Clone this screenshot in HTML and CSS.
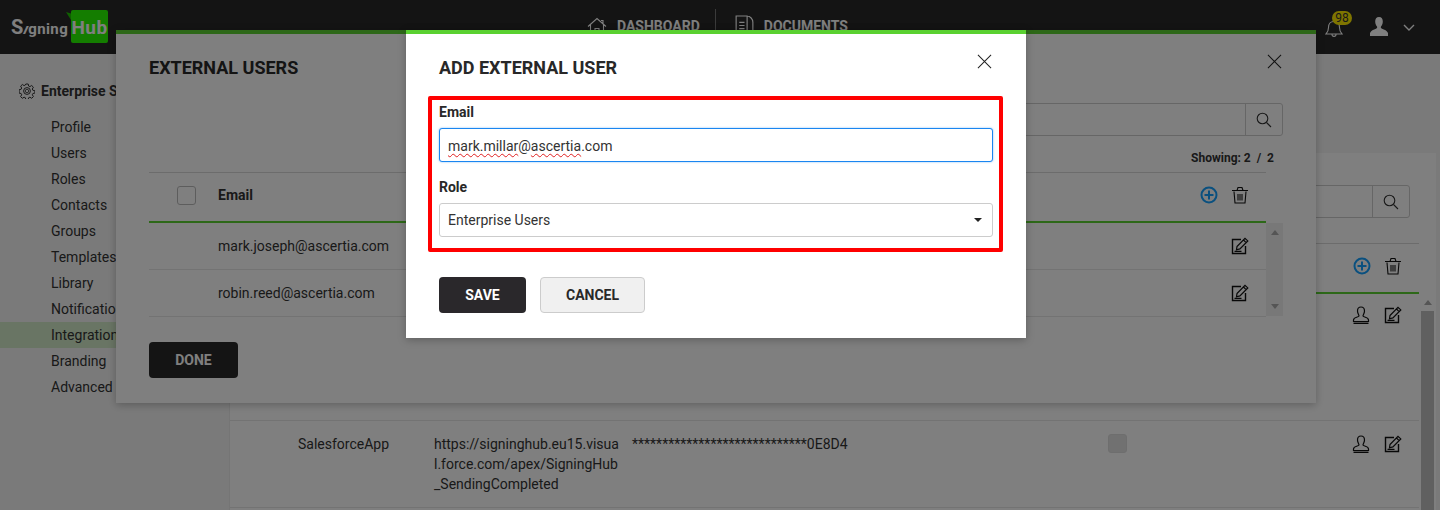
FILE: index.html
```html
<!DOCTYPE html>
<html lang="en">
<head>
<meta charset="utf-8">
<title>Add external user</title>
<link rel="stylesheet" href="styles.css">
</head>
<body>
<svg class="sprite" aria-hidden="true">
  <symbol id="i-edit" viewBox="0 0 18 18"><path d="M10 2.500H1.500v14h13V9" fill="none" stroke="currentColor" stroke-width="1.400"/><path d="M6 9.500 14 1.300l2.800 2.600-7.900 8-3.400.9zM12.500 3l2.600 2.600M3.500 14.300h7" fill="none" stroke="currentColor" stroke-width="1.200"/></symbol>
  <symbol id="i-stamp" viewBox="0 0 18 18"><path d="M9 1C6.500 1 5.500 2.800 5.500 5c0 2.500 1.500 3.500 1.500 5 0 1.200-5.500.8-5.500 4v1.500h15V14c0-3.200-5.500-2.800-5.500-4 0-1.500 1.500-2.500 1.500-5 0-2.200-1-4-3.500-4z" fill="none" stroke="currentColor" stroke-width="1.200"/><path d="M1.500 17.300h15" stroke="currentColor" stroke-width="1.400"/></symbol>
  <symbol id="i-plus" viewBox="0 0 18 18"><circle cx="9" cy="9" r="7.500" fill="none" stroke="currentColor" stroke-width="2"/><path d="M9 4.500v9M4.500 9h9" stroke="currentColor" stroke-width="2"/></symbol>
  <symbol id="i-trash" viewBox="0 0 18 18"><path d="M3 5.500 4 17h10l1-11.500M1 4.500h16M6 4.500 7 1.500h4l1 3M7 8v6.500M9 8v6.500M11 8v6.500" fill="none" stroke="currentColor" stroke-width="1.100"/></symbol>
  <symbol id="i-search" viewBox="0 0 16 16"><circle cx="6.500" cy="6.500" r="5.300" fill="none" stroke="currentColor" stroke-width="1.100"/><path d="m10.500 10.500 4.500 4.500" stroke="currentColor" stroke-width="1.100"/></symbol>
  <symbol id="i-close" viewBox="0 0 16 16"><path d="M1 1l14 14M15 1 1 15" stroke="currentColor" stroke-width="1.100"/></symbol>
</svg>

<div class="page">
  <header class="topbar">
    <div class="logo"><span class="logo-sign"><span class="logo-s">S</span><i class="logo-i">ı</i>gning</span><span class="logo-hub">Hub</span></div>
    <nav class="nav">
      <a class="nav-item">
        <svg class="nav-home" viewBox="0 0 20 18"><path d="M1 9.500 10 1.500l9 8M3.500 7.500V16.500h13V7.500M8 16.500V11.500h4v5M14 3.500h2v3" fill="none" stroke="currentColor" stroke-width="1.100"/></svg>
        DASHBOARD
      </a>
      <span class="nav-sep"></span>
      <a class="nav-item">
        <svg class="nav-doc" viewBox="0 0 18 22"><path d="M1 1h10.500v20H1zM11.500 1c3 0 5.500 3 5.500 6v14h-5.500M4 7h5M4 10h5M4 13h5M4 16h5" fill="none" stroke="currentColor" stroke-width="1.100"/></svg>
        DOCUMENTS
      </a>
    </nav>
    <div class="top-right">
      <div class="bell">
        <svg class="bell-icon" viewBox="0 0 18 18"><path d="M1 15h16c-2-2-2.500-3-2.500-6.500C14.500 5 12.500 2.500 9 2.500S3.500 5 3.500 8.500C3.500 12 3 13 1 15zM7 15.500c0 2.500 4 2.500 4 0" fill="none" stroke="currentColor" stroke-width="1.100"/></svg>
        <span class="badge">98</span>
      </div>
      <svg class="user" viewBox="0 0 18 20"><path d="M9 0c2.700 0 3.800 2 3.800 4.500 0 2.500-1 4-1.800 5-.5.900 0 1.800 1 2.300 2.500 1 5 1.700 6 4.200V19H0v-3c1-2.500 3.500-3.200 6-4.200 1-.5 1.500-1.400 1-2.300-.8-1-1.800-2.500-1.800-5C5.200 2 6.300 0 9 0z" fill="currentColor"/></svg>
      <svg class="chev" viewBox="0 0 12 8"><path d="m1 1 5 5 5-5" fill="none" stroke="currentColor" stroke-width="1.400"/></svg>
    </div>
  </header>

  <div class="body">
    <aside class="side">
      <div class="side-title">
        <svg class="gear" viewBox="0 0 16 16"><path d="M6.800 1h2.400l.4 2 1.300.6 1.800-1.100 1.700 1.700-1.100 1.800.6 1.300 2 .4v2.400l-2 .4-.6 1.300 1.100 1.800-1.700 1.700-1.800-1.100-1.300.6-.4 2H6.800l-.4-2-1.300-.6-1.800 1.100-1.700-1.700 1.100-1.800-.6-1.300-2-.4V6.700l2-.4.6-1.300-1.100-1.800 1.700-1.700 1.800 1.100 1.300-.6z" fill="none" stroke="currentColor" stroke-width="1"/><circle cx="8" cy="8" r="3.400" fill="none" stroke="currentColor" stroke-width="1"/><circle cx="8" cy="8" r="1.700" fill="none" stroke="currentColor" stroke-width=".8"/></svg>
        Enterprise Settings
      </div>
      <ul class="side-list">
        <li class="side-item">Profile</li>
        <li class="side-item">Users</li>
        <li class="side-item">Roles</li>
        <li class="side-item">Contacts</li>
        <li class="side-item">Groups</li>
        <li class="side-item">Templates</li>
        <li class="side-item">Library</li>
        <li class="side-item">Notifications</li>
        <li class="side-item is-active">Integrations</li>
        <li class="side-item">Branding</li>
        <li class="side-item">Advanced</li>
      </ul>
    </aside>

    <main class="main">
      <div class="panel">
        <section class="card">
          <div class="card-search">
            <div class="search"><span class="search-field"></span><span class="search-btn"><svg class="ic16"><use href="#i-search"/></svg></span></div>
          </div>
          <div class="card-head">
            <svg class="ic18 blue"><use href="#i-plus"/></svg>
            <svg class="ic18"><use href="#i-trash"/></svg>
          </div>
          <div class="card-row row-first">
            <span class="row-actions">
              <svg class="ic18"><use href="#i-stamp"/></svg>
              <svg class="ic18"><use href="#i-edit"/></svg>
            </span>
          </div>
          <div class="card-row row-sales">
            <span class="cell-name">SalesforceApp</span>
            <span class="cell-url">https://signinghub.eu15.visual.force.com/apex/SigningHub_SendingCompleted</span>
            <span class="cell-key">*****************************0E8D4</span>
            <span class="cell-check"><span class="check-off"></span></span>
            <span class="row-actions">
              <svg class="ic18"><use href="#i-stamp"/></svg>
              <svg class="ic18"><use href="#i-edit"/></svg>
            </span>
          </div>
        </section>
        <div class="page-scroll">
          <span class="arrow-up"></span>
          <span class="page-thumb"></span>
        </div>
      </div>
    </main>
  </div>

  <section class="modal modal-users">
    <h2 class="modal-title">EXTERNAL USERS</h2>
    <svg class="close"><use href="#i-close"/></svg>
    <div class="users-search">
      <div class="search search-wide"><span class="search-field"></span><span class="search-btn"><svg class="ic16"><use href="#i-search"/></svg></span></div>
    </div>
    <div class="showing">Showing: 2 &nbsp;/&nbsp; 2</div>
    <div class="users-head">
      <span class="check"></span>
      <span class="head-email">Email</span>
      <span class="head-actions">
        <svg class="ic18 blue"><use href="#i-plus"/></svg>
        <svg class="ic18"><use href="#i-trash"/></svg>
      </span>
    </div>
    <div class="users-body">
      <div class="users-rows">
        <div class="user-row"><span>mark.joseph@ascertia.com</span><svg class="ic18"><use href="#i-edit"/></svg></div>
        <div class="user-row"><span>robin.reed@ascertia.com</span><svg class="ic18"><use href="#i-edit"/></svg></div>
      </div>
      <div class="users-scroll"><span class="arrow-up"></span><span class="arrow-down"></span></div>
    </div>
    <button class="btn btn-done">DONE</button>
  </section>

  <div class="dim"></div>

  <section class="modal modal-add">
    <h2 class="modal-title">ADD EXTERNAL USER</h2>
    <svg class="close"><use href="#i-close"/></svg>
    <div class="highlight">
      <div class="field-label">Email</div>
      <div class="field field-focus"><span class="typo">mark.millar</span>@<span class="typo">ascertia</span>.com</div>
      <div class="field-label label-role">Role</div>
      <div class="field field-select">Enterprise Users<span class="caret"></span></div>
    </div>
    <div class="actions">
      <button class="btn btn-save">SAVE</button>
      <button class="btn btn-cancel">CANCEL</button>
    </div>
  </section>
</div>
</body>
</html>
```
FILE: styles.css
```css
* { box-sizing: border-box; }
html, body { margin: 0; height: 510px; overflow: hidden; }
body { font-family: Roboto, "Liberation Sans", sans-serif; font-size: 14px; color: #333; background: #f5f5f5; }
.sprite { width: 0; height: 0; position: absolute; }
.page { position: relative; width: 1440px; height: 510px; overflow: hidden; }

/* top bar */
.topbar { display: flex; align-items: center; height: 54px; background: #282828; color: #fff; }
.logo { display: flex; align-items: stretch; width: 97px; height: 33px; margin-left: 11px; margin-top: -1px; font-weight: 700; color: #fff; }
.logo-sign { width: 60px; font-size: 15px; line-height: 35px; white-space: nowrap; letter-spacing: .4px; }
.logo-s { font-size: 20px; }
.logo-i { display: inline-block; transform: skewX(-25deg); font-style: normal; }
.logo-hub { position: relative; flex: 1; background: #28fa00; border-radius: 2px; text-align: center; font-size: 19px; line-height: 36px; letter-spacing: .5px; }
.logo-hub::before { content: ""; position: absolute; left: -5px; top: 2px; width: 5px; height: 8px; background: #1fc000; clip-path: polygon(0 0, 100% 20%, 100% 100%); }
.nav { display: flex; align-items: center; margin-left: 479px; height: 34px; margin-top: -2px; }
.nav-item { display: flex; align-items: center; gap: 10px; font-weight: 700; font-size: 14px; color: #fff; }
.nav-home { width: 20px; height: 18px; }
.nav-doc { width: 19px; height: 23px; }
.nav-sep { width: 1px; height: 34px; margin: 0 19px 0 15px; background: #777; }
.top-right { display: flex; align-items: center; margin-left: auto; margin-right: 25px; }
.bell { position: relative; width: 18px; height: 18px; margin-top: 2px; color: #fff; }
.bell-icon { display: block; width: 18px; height: 18px; }
.badge { position: absolute; left: 7px; top: -8px; width: 20px; height: 14px; border-radius: 7px; background: #ffea00; color: #333; font-size: 12px; line-height: 14px; text-align: center; }
.user { width: 18px; height: 20px; margin-left: 27px; color: #fff; }
.chev { width: 12px; height: 8px; margin-left: 15px; margin-top: 2px; color: #fff; }

/* underlying page */
.body { display: flex; height: 456px; }
.side { width: 229px; flex: none; padding-top: 27px; }
.side-title { display: flex; align-items: center; gap: 6px; height: 20px; padding-left: 19px; font-weight: 700; white-space: nowrap; }
.gear { width: 16px; height: 16px; }
.side-list { list-style: none; margin: 13px 0 0; padding: 0; }
.side-item { height: 26px; line-height: 26px; padding-left: 51px; }
.is-active { background: #d3eac9; }
.main { flex: 1; padding-top: 99px; }
.panel { display: flex; width: 1207px; height: 380px; background: #fff; border-left: 1px solid #eaeaea; }
.card { width: 1189px; padding-top: 32px; }
.card-search { display: flex; justify-content: flex-end; padding-right: 9px; }
.search { display: flex; width: 300px; height: 33px; border: 1px solid #ccc; border-radius: 3px; background: #fff; }
.search-wide { width: 400px; }
.search-field { flex: 1; }
.search-btn { display: flex; align-items: center; justify-content: center; width: 37px; border-left: 1px solid #ccc; color: #333; }
.ic16 { width: 16px; height: 16px; }
.ic18 { width: 18px; height: 18px; color: #111; flex: none; }
.ic18.blue { color: #14a0ff; }
.card-head { display: flex; justify-content: flex-end; align-items: center; gap: 13px; height: 51px; margin-top: 25px; padding: 0 17px 4px 0; border-top: 1px solid #d8d8d8; border-bottom: 2px solid #5ad131; }
.card-row { display: flex; align-items: flex-start; border-bottom: 1px solid #e6e6e6; line-height: 20px; }
.row-first { height: 127px; padding-top: 12px; justify-content: flex-end; }
.row-sales { height: 87px; padding-top: 13px; }
.row-actions { display: flex; gap: 14px; padding-right: 17px; padding-top: 1px; }
.row-first .row-actions { padding-top: 0; }
.cell-name { width: 204px; padding-left: 68px; flex: none; }
.cell-url { width: 198px; flex: none; word-break: break-all; padding-right: 12px; }
.cell-key { width: 476px; flex: none; }
.cell-check { flex: 1; }
.check-off { display: block; width: 19px; height: 19px; border: 1px solid #ddd; border-radius: 3px; background: #e2e2e2; }
.page-scroll { width: 15px; margin-left: 1px; display: flex; flex-direction: column; align-items: center; padding-top: 147px; }
.page-thumb { width: 13px; height: 220px; margin-top: 6px; background: #c0c0c0; }
.arrow-up { width: 0; height: 0; border: 4px solid transparent; border-top: 0; border-bottom: 5px solid #aaa; }
.arrow-down { width: 0; height: 0; border: 4px solid transparent; border-bottom: 0; border-top: 5px solid #aaa; }

/* modals */
.modal { position: absolute; top: 30px; background: #fff; border-top: 4px solid #5ad131; padding: 20px 33px 25px; box-shadow: 0 2px 8px rgba(0, 0, 0, .25); }
.modal-users { left: 116px; width: 1200px; height: 373px; }
.modal-add { left: 406px; width: 620px; height: 308px; }
.modal-title { margin: 0; font-size: 18px; line-height: 28px; font-weight: 700; color: #282828; }
.close { position: absolute; top: 20px; right: 34px; width: 15px; height: 15px; color: #222; }
.users-search { display: flex; justify-content: flex-end; margin-top: 21px; }
.showing { height: 16px; margin-top: 14px; padding-right: 9px; text-align: right; font-size: 12px; line-height: 16px; font-weight: 700; }
.users-head { display: flex; align-items: center; width: 1117px; height: 51px; margin-top: 6px; padding: 0 0 4px 28px; border-top: 1px solid #d8d8d8; border-bottom: 2px solid #5ad131; }
.check { width: 19px; height: 19px; border: 1px solid #bbb; border-radius: 3px; }
.head-email { margin-left: 22px; font-weight: 700; }
.head-actions { display: flex; align-items: center; gap: 13px; margin-left: auto; margin-right: 17px; }
.users-body { display: flex; height: 94px; }
.users-rows { width: 1117px; }
.user-row { display: flex; align-items: center; justify-content: space-between; height: 47px; padding: 0 17px 1px 69px; border-bottom: 1px solid #e6e6e6; }
.users-scroll { display: flex; flex-direction: column; align-items: center; justify-content: space-between; width: 17px; height: 93px; padding: 7px 0; background: #f1f1f1; }
.btn { display: block; height: 36px; border-radius: 4px; border: 0; font: 700 14px Roboto, sans-serif; }
.btn-done { width: 89px; margin-top: 25px; background: #282828; color: #fff; }
.highlight { margin: 14px 0 0 -11px; padding: 2px 6px 11px 7px; width: 575px; height: 156px; border: 4px solid #f00; border-radius: 2px; }
.field-label { height: 20px; line-height: 20px; font-weight: 700; color: #282828; }
.label-role { margin-top: 15px; }
.field { position: relative; height: 34px; margin-top: 6px; padding: 0 8px; line-height: 32px; border: 1px solid #ccc; border-radius: 3px; background: #fff; }
.field-focus { line-height: 34px; border-color: #1a86f0; box-shadow: 0 0 2px rgba(26, 134, 240, .6); }
.typo { text-decoration: underline wavy #e02020 1px; text-underline-offset: 2px; }
.caret { position: absolute; right: 10px; top: 14px; width: 0; height: 0; border: 4px solid transparent; border-bottom: 0; border-top: 4px solid #222; }
.actions { display: flex; gap: 14px; margin-top: 25px; }
.btn-save { width: 87px; background: #2a282b; color: #fff; }
.btn-cancel { width: 105px; background: #f0f0f0; border: 1px solid #ccc; color: #282828; }

.dim { position: absolute; inset: 0; background: rgba(0, 0, 0, .5); }
```
